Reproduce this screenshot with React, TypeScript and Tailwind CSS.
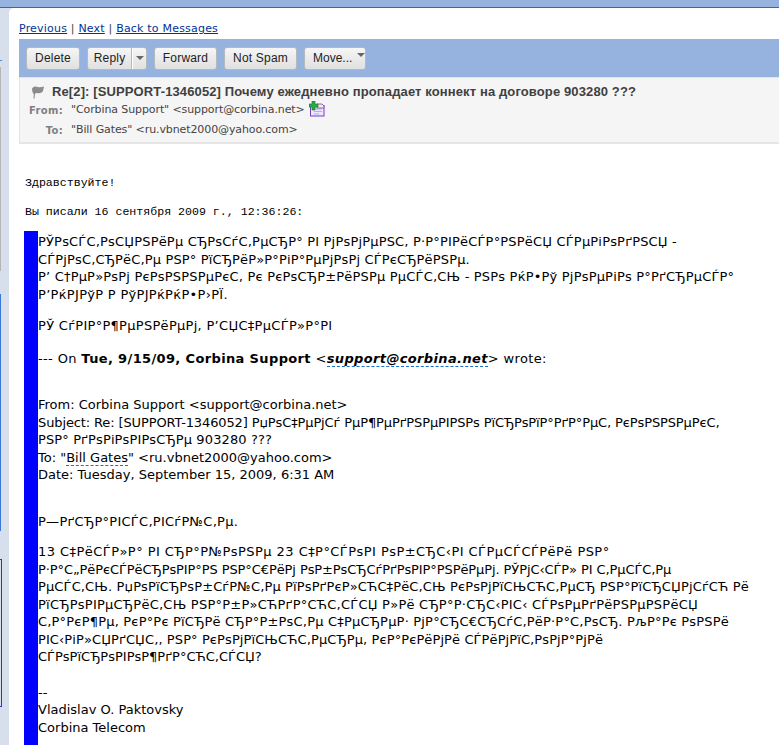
import { ReactNode } from "react";

const sans = "font-['DejaVu_Sans',sans-serif]";

function Button({ width, children }: { width: string; children: ReactNode }) {
    return (
        <div className={`${width} h-[23px] flex items-center justify-center rounded-[3px] border border-[#b4b9c0] bg-gradient-to-b from-[#f6f6f6] to-[#e0e0e0] text-[12px] tracking-[0.2px] text-[#222]`}>
            {children}
        </div>
    );
}

function Caret() {
    return <span className="block w-0 h-0 border-x-[4px] border-t-[4px] border-x-transparent border-t-[#666]" />;
}

function FlagIcon() {
    return (
        <svg width="14" height="14" viewBox="0 0 14 14" className="shrink-0">
            <path d="M1 3.5 C3 1 5 1.5 7 2 C9 2.5 11 2 13 1.5 L12 6 C11 8 8.500 8.500 6 8 C5 8 4.500 8.500 4 9 L3.500 13.500 L2.500 13.500 L2.800 9 C1.800 8.500 1 6 1 3.500 Z" fill="#8c8c8c" />
        </svg>
    );
}

function AddContactIcon() {
    return (
        <svg width="16" height="16" viewBox="0 0 16 16" className="ml-[4px] -mt-[2px] shrink-0">
            <rect x="1.500" y="4.500" width="13.500" height="10.500" fill="#efe6fb" stroke="#7a3fc4" />
            <path d="M5 8h8M5 10.500h8M5 13h5" stroke="#9ab8ea" strokeWidth="1" />
            <path d="M8 3h5l2 2v2H8z" fill="#f5ecd0" stroke="#7a3fc4" strokeWidth="0.800" />
            <path d="M3 0h3v3h3v3H6v3H3V6H0V3h3z" fill="#2fa84a" stroke="#14702c" strokeWidth="0.600" />
        </svg>
    );
}

const firstBlock = [
    { text: "РЎРѕСЃС‚РѕСЏРЅРёРµ СЂРѕСѓС‚РµСЂР° РІ РјРѕРјРµРЅС‚ Р·Р°РІРёСЃР°РЅРёСЏ СЃРµРіРѕРґРЅСЏ -", track: "tracking-[0.18px]" },
    { text: "СЃРјРѕС‚СЂРёС‚Рµ РЅР° РїСЂРёР»Р°РіР°РµРјРѕРј СЃРєСЂРёРЅРµ.", track: "tracking-[0.15px]" },
    { text: "Р’ С†РµР»РѕРј РєРѕРЅРЅРµРєС‚ Рє РєРѕСЂР±РёРЅРµ РµСЃС‚СЊ - РЅРѕ РќР•Рў РјРѕРµРіРѕ Р°РґСЂРµСЃР°", track: "tracking-[0.19px]" },
    { text: "Р’РќРЈРўР Р РўРЈРќРќР•Р›РЇ.", track: "tracking-[0.3px]" },
];

const replyBlock = [
    { text: "13 С‡РёСЃР»Р° РІ СЂР°Р№РѕРЅРµ 23 С‡Р°СЃРѕРІ РѕР±СЂС‹РІ СЃРµСЃСЃРёРё РЅР°", track: "tracking-[0.45px]" },
    { text: "Р·Р°С„РёРєСЃРёСЂРѕРІР°РЅ РЅР°С€РёРј РѕР±РѕСЂСѓРґРѕРІР°РЅРёРµРј. РЎРјС‹СЃР» РІ С‚РµСЃС‚Рµ", track: "tracking-[-0.09px]" },
    { text: "РµСЃС‚СЊ. РџРѕРїСЂРѕР±СѓР№С‚Рµ РїРѕРґРєР»СЋС‡РёС‚СЊ РєРѕРјРїСЊСЋС‚РµСЂ РЅР°РїСЂСЏРјСѓСЋ Рё", track: "tracking-[0.13px]" },
    { text: "РїСЂРѕРІРµСЂРёС‚СЊ РЅР°Р±Р»СЋРґР°СЋС‚СЃСЏ Р»Рё СЂР°Р·СЂС‹РІС‹ СЃРѕРµРґРёРЅРµРЅРёСЏ", track: "tracking-[0.24px]" },
    { text: "С‚Р°РєР¶Рµ, РєР°Рє РїСЂРё СЂР°Р±РѕС‚Рµ С‡РµСЂРµР· РјР°СЂС€СЂСѓС‚РёР·Р°С‚РѕСЂ. РљР°Рє РѕРЅРё", track: "tracking-[0.19px]" },
    { text: "РІС‹РіР»СЏРґСЏС‚, РЅР° РєРѕРјРїСЊСЋС‚РµСЂРµ, РєР°РєРёРјРё СЃРёРјРїС‚РѕРјР°РјРё", track: "tracking-[0.1px]" },
    { text: "СЃРѕРїСЂРѕРІРѕР¶РґР°СЋС‚СЃСЏ?", track: "" },
];

export default function App() {
    return (
        <div className={`h-[745px] w-[779px] overflow-hidden bg-white flex flex-col ${sans}`}>
            {/* Top bar */}
            <div className="h-[8px] shrink-0 bg-[#96b2de] border-b border-[#3a66ae]" />

            <div className="flex flex-1 min-h-0 bg-[#d6dfeb]">
                {/* Edge of the folder column */}
                <div className="w-[9px] shrink-0 flex flex-col">
                    <div className="mt-[52px] h-[1px] w-[2px] bg-[#4a90d9]" />
                    <div className="mt-[6px] h-[204px] w-[1px] bg-[#b5b5b5]" />
                    <div className="mt-[23px] h-[237px] w-[1px] bg-[#3a78d8]" />
                    <div className="mt-[28px] h-[148px] w-[2px] border-y border-r border-[#3333cc]" />
                </div>

                <div className="flex-1 min-w-0 bg-white rounded-tl-[5px] flex flex-col">
                    {/* Message navigation */}
                    <div className="pl-[10px] pt-[14px] h-[31px] text-[11px] leading-[14px] tracking-[0.2px] text-[#444]">
                        <span className="underline text-[#003399]">Previous</span>
                        <span> | </span>
                        <span className="underline text-[#003399]">Next</span>
                        <span> | </span>
                        <span className="underline text-[#003399]">Back to Messages</span>
                    </div>

                    <div className="ml-[10px] font-['Liberation_Sans',sans-serif]">
                        {/* Toolbar */}
                        <div className="h-[38px] bg-[#96b2de] flex items-center gap-[7px] pl-[7px]">
                            <Button width="w-[54px]">Delete</Button>
                            <div className="w-[60px] h-[23px] flex rounded-[3px] border border-[#b4b9c0] bg-gradient-to-b from-[#f6f6f6] to-[#e0e0e0] text-[12px] tracking-[0.2px] text-[#222]">
                                <span className="w-[44px] flex items-center justify-center border-r border-[#b4b9c0]">Reply</span>
                                <span className="flex-1 flex items-center justify-center border-l border-white">
                                    <Caret />
                                </span>
                            </div>
                            <Button width="w-[63px]">Forward</Button>
                            <Button width="w-[73px]">Not Spam</Button>
                            <div className="w-[62px] h-[23px] flex items-center pl-[8px] gap-[5px] rounded-[3px] border border-[#b4b9c0] bg-gradient-to-b from-[#f6f6f6] to-[#e0e0e0] text-[12px] text-[#222]">
                                <span>Move...</span>
                                <span className="-mt-[6px]">
                                    <Caret />
                                </span>
                            </div>
                        </div>

                        {/* Message header */}
                        <div className="h-[67px] bg-[#f5f5f5] border-t border-[#dfe3ea] border-l border-l-[#e4e4e4] border-b-[2px] border-b-[#e6e6e6]">
                            <div className="flex items-center pl-[11px] pt-[7px] h-[21px]">
                                <FlagIcon />
                                <span className="ml-[7px] text-[13px] leading-[16px] font-bold text-[#404040] tracking-[0.12px] whitespace-nowrap">
                                    Re[2]: [SUPPORT-1346052] Почему ежедневно пропадает коннект на договоре 903280 ???
                                </span>
                            </div>
                            <div className={`${sans} flex items-center h-[20px] mt-[1px] text-[10px] text-[#444]`}>
                                <span className="w-[43px] text-right font-bold tracking-[0.3px] text-[#808080]">From:</span>
                                <span className="ml-[8px] text-[11px] tracking-[-0.1px]">"Corbina Support" &lt;support@corbina.net&gt;</span>
                                <AddContactIcon />
                            </div>
                            <div className={`${sans} flex items-center h-[20px] text-[10px] text-[#444]`}>
                                <span className="w-[43px] text-right font-bold tracking-[0.3px] text-[#808080]">To:</span>
                                <span className="ml-[8px] text-[11px] tracking-[-0.1px]">"Bill Gates" &lt;ru.vbnet2000@yahoo.com&gt;</span>
                            </div>
                        </div>
                    </div>

                    {/* Message body */}
                    <div className="font-['Liberation_Mono',monospace] text-[11.6px] leading-[14px] text-black pl-[16px] whitespace-pre">
                        <div className="mt-[32px]">Здравствуйте!</div>
                        <div className="mt-[15px]">Вы писали 16 сентября 2009 г., 12:36:26:</div>
                    </div>

                    <div className="ml-[15px] mt-[12px] flex-1 min-h-0 border-l-[14px] border-[#0000ff] text-[13px] leading-[17.500px] text-black whitespace-nowrap pt-[2px]">
                        {firstBlock.map((line) => (
                            <div key={line.text} className={line.track}>{line.text}</div>
                        ))}
                        <div className="mt-[14px] tracking-[0.29px]">РЎ СѓРІР°Р¶РµРЅРёРµРј, Р’СЏС‡РµСЃР»Р°РІ</div>
                        <div className="mt-[15px] tracking-[0.36px]">
                            --- On <b>Tue, 9/15/09, Corbina Support</b> <i>&lt;</i>
                            <b className="italic border-b border-dashed border-[#1a6fc8]">support@corbina.net</b>
                            <i>&gt;</i> wrote:
                        </div>

                        <div className="mt-[29px]">From: Corbina Support &lt;support@corbina.net&gt;</div>
                        <div className="tracking-[-0.12px]">Subject: Re: [SUPPORT-1346052] РџРѕС‡РµРјСѓ РµР¶РµРґРЅРµРІРЅРѕ РїСЂРѕРїР°РґР°РµС‚ РєРѕРЅРЅРµРєС‚</div>
                        <div className="tracking-[0.12px]">РЅР° РґРѕРіРѕРІРѕСЂРµ 903280 ???</div>
                        <div>
                            To: "<span className="border-b border-dashed border-[#1a6fc8]">Bill Gates</span>" &lt;ru.vbnet2000@yahoo.com&gt;
                        </div>
                        <div>Date: Tuesday, September 15, 2009, 6:31 AM</div>

                        <div className="mt-[29px] tracking-[0.27px]">Р—РґСЂР°РІСЃС‚РІСѓР№С‚Рµ.</div>
                        <div className="mt-[13px]">
                            {replyBlock.map((line) => (
                                <div key={line.text} className={line.track}>{line.text}</div>
                            ))}
                        </div>

                        <div className="mt-[18px]">--</div>
                        <div>Vladislav O. Paktovsky</div>
                        <div>Corbina Telecom</div>
                    </div>
                </div>
            </div>
        </div>
    );
}
